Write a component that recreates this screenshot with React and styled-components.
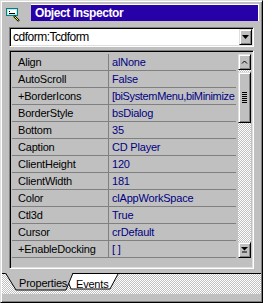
import React from 'react';
import styled, { createGlobalStyle } from 'styled-components';

const GlobalStyle = createGlobalStyle`
  body {
    margin: 0;
    background: #c0c0c0;
  }
`;

const rows = [
  { name: 'Align', value: 'alNone' },
  { name: 'AutoScroll', value: 'False' },
  { name: '+BorderIcons', value: '[biSystemMenu,biMinimize' },
  { name: 'BorderStyle', value: 'bsDialog' },
  { name: 'Bottom', value: '35' },
  { name: 'Caption', value: 'CD Player' },
  { name: 'ClientHeight', value: '120' },
  { name: 'ClientWidth', value: '181' },
  { name: 'Color', value: 'clAppWorkSpace' },
  { name: 'Ctl3d', value: 'True' },
  { name: 'Cursor', value: 'crDefault' },
  { name: '+EnableDocking', value: '[ ]' },
];

const raised = `
  border: 1px solid;
  border-color: #dfdfdf #000 #000 #dfdfdf;
  box-shadow: inset 1px 1px #fff, inset -1px -1px #808080;
`;

const sunken = `
  border: 1px solid;
  border-color: #808080 #fff #fff #808080;
  box-shadow: inset 1px 1px #000, inset -1px -1px #dfdfdf;
`;

const dither = `
  background: repeating-conic-gradient(#c0c0c0 0 25%, #fff 0 50%) 0 0 / 2px 2px;
`;

const Window = styled.div`
  width: 263px;
  height: 303px;
  box-sizing: border-box;
  background: #c0c0c0;
  ${raised}
  padding: 3px 3px 0 3px;
  display: flex;
  flex-direction: column;
  font-family: "Liberation Sans", Arial, sans-serif;
`;

const Header = styled.div`
  display: flex;
  align-items: center;
  height: 17px;
`;

const IconBox = styled.div`
  width: 16px;
  height: 16px;
  margin: 2px 10px 0 1px;
  display: flex;
`;

const TitleBar = styled.div`
  flex: 1;
  height: 17px;
  box-sizing: border-box;
  background: #2800a8;
  border-top: 1px solid #fff;
  border-right: 1px solid #fff;
  color: #fff;
  font-weight: bold;
  font-size: 12px;
  letter-spacing: -0.4px;
  line-height: 16px;
  padding-left: 4px;
`;

const Combo = styled.div`
  margin: 6px 5px 0 5px;
  height: 20px;
  box-sizing: border-box;
  ${sunken}
  background: #fff;
  display: flex;
  padding: 1px;
`;

const ComboText = styled.div`
  flex: 1;
  font-size: 12px;
  letter-spacing: -0.5px;
  line-height: 16px;
  padding-left: 2px;
  color: #000;
`;

const DropButton = styled.div`
  width: 13px;
  height: 16px;
  box-sizing: border-box;
  background: #c0c0c0;
  ${raised}
  display: flex;
  align-items: center;
  justify-content: center;
`;

const Frame = styled.div`
  margin: 3px 5px 0 5px;
  height: 219px;
  box-sizing: border-box;
  ${sunken}
  padding: 2px 2px 0 2px;
  display: flex;
  align-items: flex-start;
`;

const Table = styled.div`
  flex: 1;
  padding: 1px 2px 0 0;
  overflow: hidden;
`;

const Row = styled.div`
  display: flex;
  height: 17px;
  box-sizing: border-box;
  border-bottom: 1px solid #808080;
  font-size: 11px;
  line-height: 16px;
  letter-spacing: -0.2px;
`;

const NameCell = styled.div`
  width: 97px;
  flex-shrink: 0;
  box-sizing: border-box;
  padding-left: 6px;
  border-right: 1px solid #808080;
  color: #000;
  white-space: nowrap;
`;

const ValueCell = styled.div`
  flex: 1;
  padding-left: 3px;
  color: #000080;
  white-space: nowrap;
  letter-spacing: ${p => (p.$tight ? '-0.35px' : '-0.2px')};
`;

const ScrollBar = styled.div`
  width: 13px;
  height: 204px;
  margin-top: 1px;
  display: flex;
  flex-direction: column;
`;

const ScrollButton = styled.div`
  height: 16px;
  box-sizing: border-box;
  background: #c0c0c0;
  ${raised}
  display: flex;
  align-items: center;
  justify-content: center;
`;

const Track = styled.div`
  flex: 1;
  ${dither}
  padding-top: 2px;
`;

const Thumb = styled.div`
  height: 51px;
  box-sizing: border-box;
  background: #c0c0c0;
  ${raised}
  display: flex;
  align-items: center;
  justify-content: center;
`;

const Grip = styled.div`
  width: 5px;
  height: 11px;
  background: repeating-linear-gradient(#000 0 1px, transparent 1px 2px);
`;

const TabStrip = styled.div`
  margin: 4px -2px 0 -2px;
  height: 20px;
  ${dither}
  border-top: 1px solid #000;
  display: flex;
  align-items: flex-start;
  padding-left: 3px;
`;

const Tab = styled.div`
  position: relative;
  width: ${p => p.$width}px;
  height: ${p => (p.$active ? 18 : 16)}px;
  margin-top: ${p => (p.$active ? -1 : 0)}px;
  margin-left: ${p => p.$offset || 0}px;
  z-index: ${p => (p.$active ? 2 : 1)};
  font-size: 11px;
  letter-spacing: -0.2px;
  line-height: 14px;
  padding-top: 3px;
  padding-left: ${p => p.$pad}px;
  box-sizing: border-box;
  color: #000;
`;

const TabShape = styled.svg`
  position: absolute;
  left: 0;
  top: 0;
  z-index: -1;
`;

const TabLabel = styled.span`
  position: relative;
`;

const InspectorIcon = () => (
  <svg width="16" height="16" viewBox="0 0 16 16">
    <rect x="1.5" y="2.5" width="11" height="7" fill="#c0e8e8" stroke="#008080" />
    <rect x="3" y="4" width="8" height="4" fill="#fff" />
    <path d="M4 7.5h6" stroke="#000" />
    <path d="M4 5.5h1" stroke="#000" />
    <path d="M9 10l5 5" stroke="#000" strokeWidth="2.2" />
    <path d="M9.5 10.5l4 4" stroke="#ffff00" strokeWidth="1" />
  </svg>
);

const DownArrow = () => (
  <svg width="7" height="5" viewBox="0 0 7 5">
    <path d="M0 0h7L3.5 4z" fill="#000" />
  </svg>
);

const UpCaret = () => (
  <svg width="7" height="4" viewBox="0 0 7 4">
    <path d="M1 3.5L3.5 1 6 3.5" stroke="#000" fill="none" />
  </svg>
);

const ScrollDown = () => (
  <svg width="7" height="6" viewBox="0 0 7 6">
    <path d="M0 0h7L3.5 3.5z" fill="#000" />
    <path d="M1 5h5" stroke="#000" />
  </svg>
);

export default function App() {
  return (
    <>
      <GlobalStyle />
      <Window>
        <Header>
          <IconBox><InspectorIcon /></IconBox>
          <TitleBar>Object Inspector</TitleBar>
        </Header>

        <Combo>
          <ComboText>cdform:Tcdform</ComboText>
          <DropButton><DownArrow /></DropButton>
        </Combo>

        <Frame>
          <Table>
            {rows.map(r => (
              <Row key={r.name}>
                <NameCell>{r.name}</NameCell>
                <ValueCell $tight={r.value.length > 20}>{r.value}</ValueCell>
              </Row>
            ))}
          </Table>
          <ScrollBar>
            <ScrollButton><UpCaret /></ScrollButton>
            <Track>
              <Thumb><Grip /></Thumb>
            </Track>
            <ScrollButton><ScrollDown /></ScrollButton>
          </ScrollBar>
        </Frame>

        <TabStrip>
          <Tab $active $width={69} $pad={14}>
            <TabShape width="69" height="18" viewBox="0 0 69 18">
              <path d="M0 0L11 17H61L68 0Z" fill="#c0c0c0" />
              <path d="M0.5 0L11 17H61L68 0" stroke="#000" fill="none" />
            </TabShape>
            <TabLabel>Properties</TabLabel>
          </Tab>
          <Tab $width={54} $offset={-9} $pad={11}>
            <TabShape width="54" height="16" viewBox="0 0 54 16">
              <path d="M0 0L6 15H45L53 0Z" fill="#fff" />
              <path d="M0 0L6 15H45L53 0" stroke="#000" fill="none" />
            </TabShape>
            <TabLabel>Events</TabLabel>
          </Tab>
        </TabStrip>
      </Window>
    </>
  );
}
